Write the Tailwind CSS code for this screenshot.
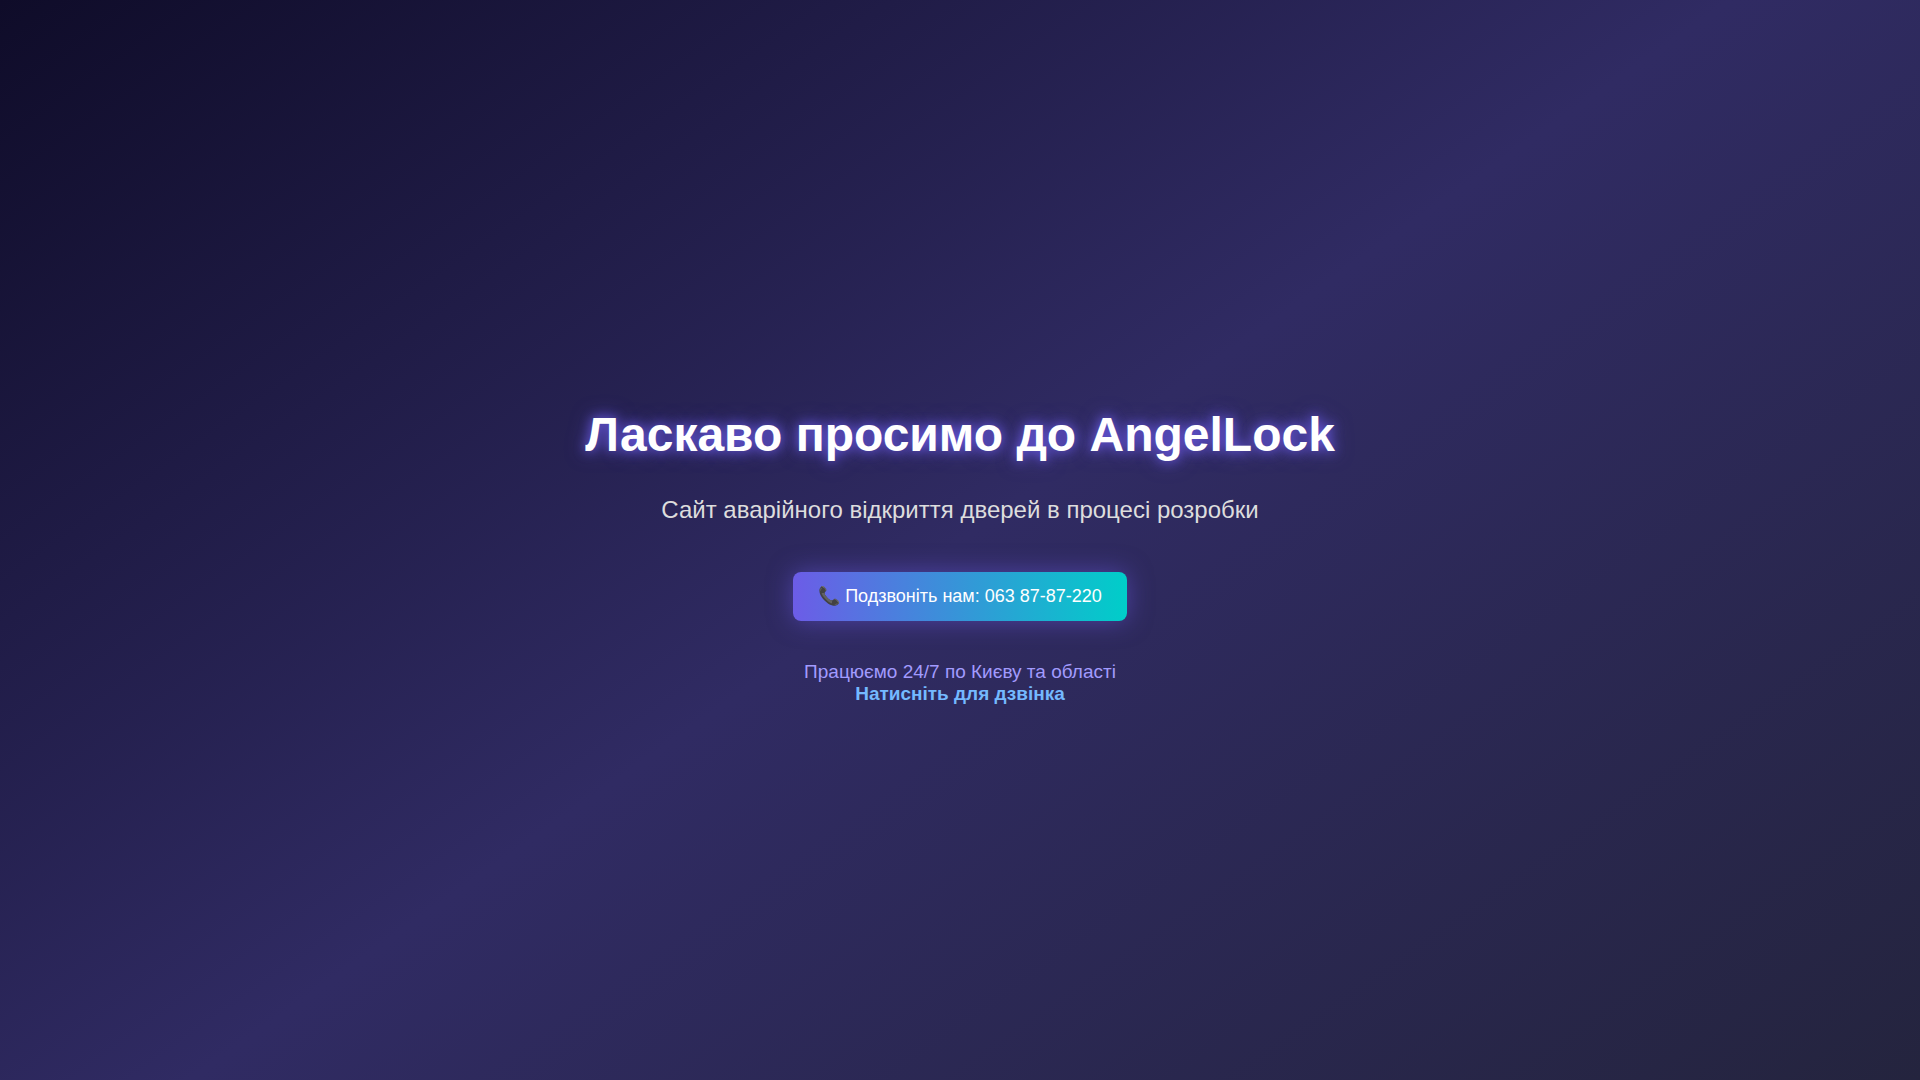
<!DOCTYPE html>
<html lang="uk">
<head>
<meta charset="utf-8">
<meta name="viewport" content="width=device-width, initial-scale=1">
<title>AngelLock</title>
<script src="https://cdn.jsdelivr.net/npm/@tailwindcss/browser@4"></script>
</head>
<body class="min-h-screen bg-[linear-gradient(145deg,#0f0c29,#302b63,#24243e)] font-['Liberation_Sans',Arial,sans-serif] text-white">
<main class="flex min-h-screen flex-col items-center justify-center px-4 pt-8 text-center">
  <h1 class="text-5xl leading-[54px] font-bold [text-shadow:0_0_12px_#6c5ce7,0_0_20px_rgba(108,92,231,0.6)]">Ласкаво просимо до AngelLock</h1>
  <p class="mt-[34px] text-2xl leading-7 text-[#dddddd]">Сайт аварійного відкриття дверей в процесі розробки</p>
  <a href="tel:0638787220" class="mt-12 rounded-lg bg-[linear-gradient(90deg,#6c5ce7,#00cec9)] px-[25px] py-3.5 text-lg leading-[21px] shadow-[0_0_25px_rgba(108,92,231,0.5)]">📞 Подзвоніть нам: 063 87-87-220</a>
  <p class="mt-10 text-[19px] leading-[22px] text-[#a29bfe]">Працюємо 24/7 по Києву та області<br><a href="tel:0638787220" class="font-bold text-[#74b9ff]">Натисніть для дзвінка</a></p>
</main>
</body>
</html>
